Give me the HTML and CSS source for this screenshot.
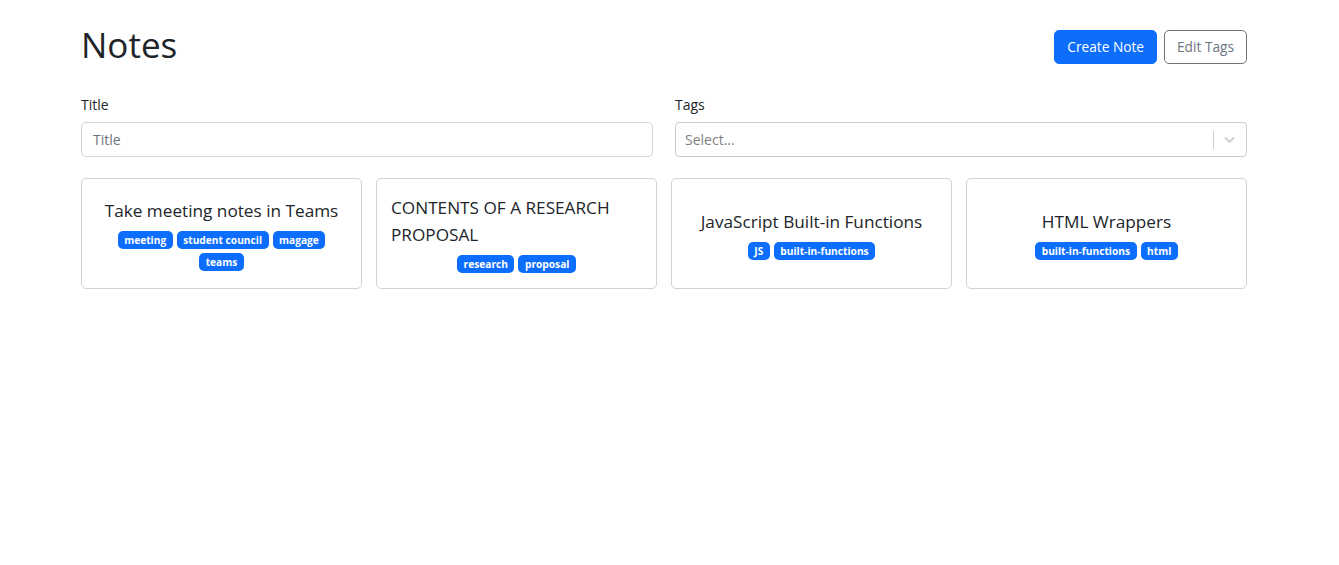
FILE: index.html
```html
<!DOCTYPE html>
<html lang="en">
<head>
<meta charset="utf-8">
<title>Notes</title>
<link rel="stylesheet" href="styles.css">
</head>
<body>
<div class="container">
  <div class="header">
    <h1 class="page-title">Notes</h1>
    <div class="actions">
      <button class="btn btn-primary">Create Note</button>
      <button class="btn btn-outline">Edit Tags</button>
    </div>
  </div>
  <form class="filters">
    <div class="field">
      <label class="label" for="title">Title</label>
      <input class="input" id="title" type="text" placeholder="Title">
    </div>
    <div class="field">
      <label class="label">Tags</label>
      <div class="select">
        <div class="select-value">Select...</div>
        <div class="select-indicators">
          <span class="select-sep"></span>
          <span class="select-arrow">
            <svg viewBox="0 0 20 20" width="17" height="17" aria-hidden="true"><path fill="currentColor" d="M4.516 7.548c0.436-0.446 1.043-0.481 1.576 0l3.908 3.747 3.908-3.747c0.533-0.481 1.141-0.446 1.574 0 0.436 0.445 0.408 1.197 0 1.615-0.406 0.418-4.695 4.502-4.695 4.502-0.217 0.223-0.502 0.335-0.787 0.335s-0.57-0.112-0.789-0.335c0 0-4.287-4.084-4.695-4.502s-0.436-1.170 0-1.615z"/></svg>
          </span>
        </div>
      </div>
    </div>
  </form>
  <div class="cards">
    <div class="card">
      <div class="card-title">Take meeting notes in Teams</div>
      <div class="tags"><span class="badge">meeting</span><span class="badge">student council</span><span class="badge">magage</span><span class="badge">teams</span></div>
    </div>
    <div class="card">
      <div class="card-title">CONTENTS OF A RESEARCH PROPOSAL</div>
      <div class="tags"><span class="badge">research</span><span class="badge">proposal</span></div>
    </div>
    <div class="card">
      <div class="card-title">JavaScript Built-in Functions</div>
      <div class="tags"><span class="badge">JS</span><span class="badge">built-in-functions</span></div>
    </div>
    <div class="card">
      <div class="card-title">HTML Wrappers</div>
      <div class="tags"><span class="badge">built-in-functions</span><span class="badge">html</span></div>
    </div>
  </div>
</div>
</body>
</html>
```
FILE: styles.css
```css
* { box-sizing: border-box; }
html, body { margin: 0; padding: 0; background: #fff; }
body {
  font-family: "Open Sans", "Noto Sans", sans-serif;
  font-size: 14px;
  line-height: 1.5;
  color: #212529;
}
.container {
  width: 1166px;
  margin-left: 81px;
  padding-top: 26px;
}
.header {
  display: flex;
  align-items: center;
  justify-content: space-between;
  height: 42px;
  margin-bottom: 26px;
}
.page-title {
  margin: 0 0 5px 0;
  font-size: 35px;
  font-weight: 400;
  line-height: 1.2;
}
.actions { display: flex; gap: 7px; }
.btn {
  font-family: inherit;
  font-size: 13.7px;
  line-height: 22px;
  padding: 5px 12px;
  border-radius: 5px;
  border: 1px solid transparent;
  cursor: pointer;
}
.btn-primary { background: #0d6efd; border-color: #0d6efd; color: #fff; }
.btn-outline { background: #fff; border-color: #6c757d; color: #6c757d; }
.filters {
  display: grid;
  grid-template-columns: 1fr 1fr;
  column-gap: 22px;
  margin: 0 0 21px 0;
}
.label { display: block; line-height: 21px; margin-bottom: 7px; }
.input {
  display: block;
  width: 100%;
  height: 35px;
  font-family: inherit;
  font-size: 14px;
  padding: 5px 11px;
  border: 1px solid #ced4da;
  border-radius: 5px;
  color: #212529;
}
.input::placeholder { color: #6c757d; }
.select {
  display: flex;
  align-items: center;
  height: 35px;
  border: 1px solid #ccc;
  border-radius: 4px;
}
.select-value { flex: 1; padding-left: 9px; color: #808080; }
.select-indicators { display: flex; align-items: center; height: 100%; }
.select-sep { width: 1px; height: 18px; background: #ccc; }
.select-arrow { display: flex; padding: 0 8px 0 7px; color: #ccc; }
.cards {
  display: grid;
  grid-template-columns: repeat(4, 1fr);
  gap: 14px;
}
.card {
  display: flex;
  flex-direction: column;
  align-items: center;
  justify-content: center;
  gap: 7px;
  padding: 14px;
  border: 1px solid rgba(0,0,0,.175);
  border-radius: 5px;
  min-height: 111px;
}
.card-title { font-size: 17.2px; line-height: 27px; }
.tags {
  display: flex;
  flex-wrap: wrap;
  justify-content: center;
  gap: 4px;
}
.badge {
  display: inline-block;
  background: #0d6efd;
  color: #fff;
  font-size: 10.2px;
  font-weight: 700;
  line-height: 10px;
  padding: 4px 6.5px;
  border-radius: 5px;
  white-space: nowrap;
}
```
